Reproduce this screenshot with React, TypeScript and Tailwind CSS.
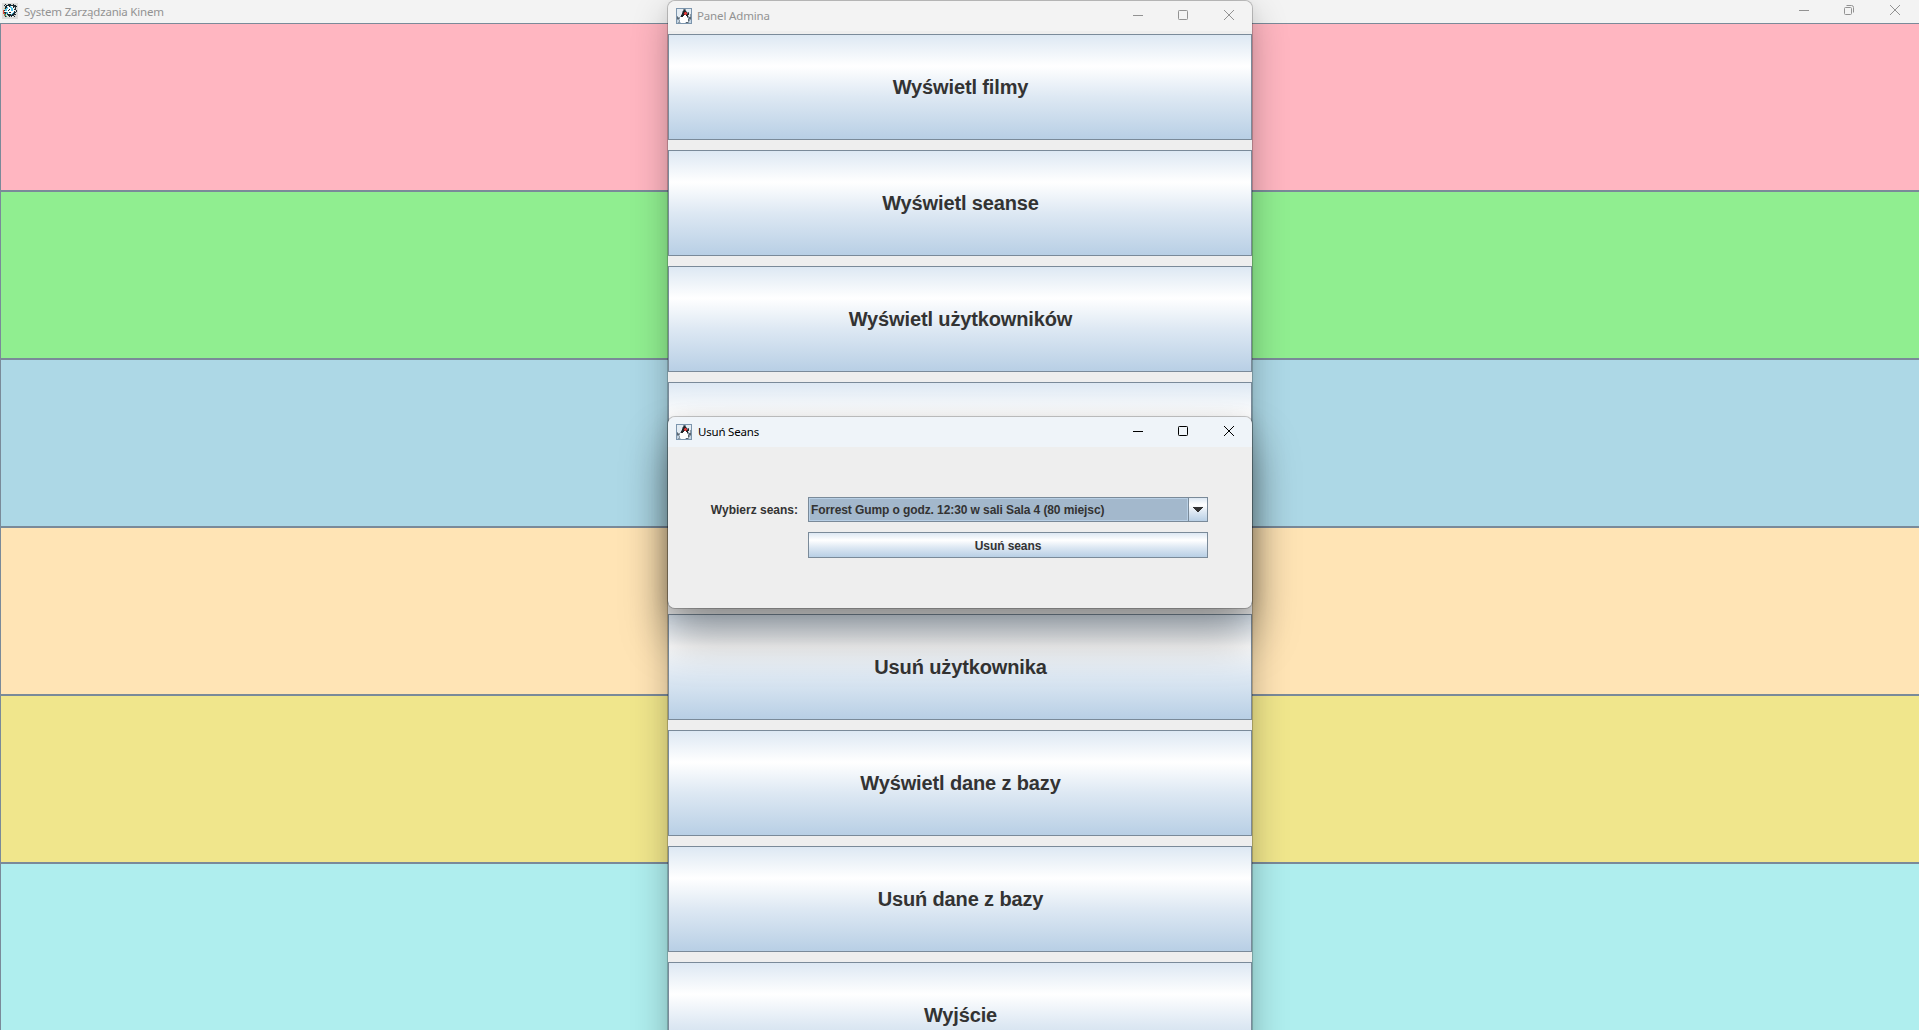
import React from "react";

const rows = ["bg-[#ffb6c1]", "bg-[#90ee90]", "bg-[#add8e6]", "bg-[#ffe4b5]", "bg-[#f0e68c]", "bg-[#afeeee]"];

const actions = [
  "Wyświetl filmy",
  "Wyświetl seanse",
  "Wyświetl użytkowników",
  "",
  "",
  "Usuń użytkownika",
  "Wyświetl dane z bazy",
  "Usuń dane z bazy",
  "Wyjście",
];

const metal =
  "border border-[#7a8a99] bg-[linear-gradient(to_bottom,#dde8f3_0%,#ffffff_30%,#dde8f3_60%,#b8cfe5_100%)] font-bold text-[#333333]";

const palette: Record<string, string> = {
  B: "#7c95ad",
  b: "#c3d3e1",
  w: "#ffffff",
  l: "#e4ecf3",
  g: "#8d9aa5",
  d: "#596570",
  k: "#23272b",
  r: "#e23a38",
  m: "#8c1f22",
  s: "#dcdcda",
  n: "#1d2b31",
  c: "#56c4e6",
  t: "#2b7d90",
  o: "#e0503a",
  y: "#e3b04c",
  e: "#49a06c",
};

const duke = [
  "BBBBBBBBBBBBBBBB",
  "BllllllgdglllllB",
  "BlllllldkdlllllB",
  "BlllllgkkkgllllB",
  "BllllldkmrmgdllB",
  "BlllllkkrrrdkllB",
  "BllllgkkmrmkklgB",
  "BllllkkkwwkkllgB",
  "BgllgkkwwwwkglgB",
  "BdggwwwwwwwggddB",
  "BddgwwwwwwwwgddB",
  "BggbwwwwwwwwdggB",
  "BbbgwwwwwwwwdgbB",
  "BbbgwwwwwwwwgbbB",
  "BbggbwwwwbddgbbB",
  "BBBBBBBBBBBBBBBB",
];

const cinema = [
  "ssssssssssssssss",
  "sssnssnnnssnssss",
  "ssnsnnnnnnnnnnss",
  "sssnnwwncwwnnnns",
  "sssnncwwccwnsnss",
  "ssynccwwwccwsnss",
  "sssccwwnwccwnnss",
  "sonccwnwwccwwsns",
  "soswwwwwwwwwnsns",
  "sonntcwnnwwcnnss",
  "soonctwwwwcnnsss",
  "sseesnnnncnnnnss",
  "ssoessnnnnnnssss",
  "sssnessnsnwsnsss",
  "ssssssssssssssss",
  "ssssssssssssssss",
];

function PixelIcon({ map }: { map: string[] }) {
  return (
    <svg width="16" height="16" viewBox="0 0 16 16" shapeRendering="crispEdges" className="shrink-0">
      {map.map((line, y) =>
        line.split("").map((p, x) => <rect key={`${x}-${y}`} x={x} y={y} width="1" height="1" fill={palette[p]} />)
      )}
    </svg>
  );
}

function Controls({ restore = false }: { restore?: boolean }) {
  return (
    <div className="flex items-center pb-[2px]">
      <svg width="10" height="10" viewBox="0 0 10 10" stroke="currentColor">
        <path d="M0 5.5h10" />
      </svg>
      <svg width="10" height="10" viewBox="0 0 10 10" fill="none" stroke="currentColor" className="ml-[35px]">
        {restore ? (
          <>
            <rect x=".5" y="2.5" width="7" height="7" rx="1" />
            <path d="M2.5 .5h5a2 2 0 0 1 2 2v5" />
          </>
        ) : (
          <rect x=".5" y=".5" width="9" height="9" rx=".8" />
        )}
      </svg>
      <svg width="10" height="10" viewBox="0 0 10 10" stroke="currentColor" className="ml-9">
        <path d="M0 0l10 10M10 0L0 10" />
      </svg>
    </div>
  );
}

export default function App() {
  return (
    <div className="relative h-[1030px] w-[1919px] overflow-hidden bg-[#f3f3f3] font-['Liberation_Sans',sans-serif]">
      <header className="mb-px flex h-[22px] items-center pl-[2px] pr-[19px] text-[#929292]">
        <PixelIcon map={cinema} />
        <span className="ml-[6px] whitespace-nowrap pt-[2px] font-['Noto_Sans',sans-serif] text-[11.5px] leading-[20px] tracking-[-0.2px]">
          System Zarządzania Kinem
        </span>
        <div className="ml-auto">
          <Controls restore />
        </div>
      </header>
      <main>
        {rows.map((color) => (
          <div key={color} className={`h-[168px] border border-r-0 border-[#7a8a99] ${color}`} />
        ))}
      </main>

      <section className="absolute left-[667px] top-0 h-[1060px] w-[586px] rounded-t-lg border border-black/20 bg-[#eeeeee] bg-clip-padding shadow-[0_14px_36px_rgba(0,0,0,0.24),0_2px_14px_rgba(0,0,0,0.05)]">
        <header className="flex h-[30px] items-center rounded-t-lg bg-[#f3f3f3] pl-2 pr-[18px] text-[#929292]">
          <PixelIcon map={duke} />
          <span className="ml-[5px] font-['Noto_Sans',sans-serif] text-[11.5px] tracking-[-0.15px]">Panel Admina</span>
          <div className="ml-auto">
            <Controls />
          </div>
        </header>
        <div className="mt-[3px] flex flex-col gap-[10px]">
          {actions.map((label, i) => (
            <button key={i} className={`h-[106px] w-full pl-px text-[20px] tracking-[-0.13px] ${metal}`}>
              {label}
            </button>
          ))}
        </div>
      </section>

      <section className="absolute left-[667px] top-[416px] h-[193px] w-[586px] rounded-lg border border-black/20 bg-[#eeeeee] bg-clip-padding shadow-[0_28px_46px_rgba(0,0,0,0.36),0_2px_18px_rgba(0,0,0,0.10)]">
        <header className="flex h-[30px] items-center rounded-t-lg bg-[#eff4f9] pl-2 pr-[18px] text-black">
          <PixelIcon map={duke} />
          <span className="ml-[6px] font-['Noto_Sans',sans-serif] text-[11.5px] tracking-[-0.2px]">Usuń Seans</span>
          <div className="ml-auto">
            <Controls />
          </div>
        </header>
        <div className="grid grid-cols-[130px_400px] gap-x-[10px] gap-y-[10px] pt-[50px] text-[12px] font-bold text-[#333333]">
          <label className="self-center text-right">Wybierz seans:</label>
          <div className="flex h-[25px] border border-[#7a8a99]">
            <div className="flex flex-1 items-center border border-[#b8cfe5] bg-[#a3b8cc] pl-px tracking-[-0.09px]">
              Forrest Gump o godz. 12:30 w sali Sala 4 (80 miejsc)
            </div>
            <div className="flex w-[19px] items-center border-l border-[#7a8a99] bg-[linear-gradient(to_bottom,#dde8f3_0%,#ffffff_30%,#dde8f3_60%,#b8cfe5_100%)] pl-1">
              <svg width="10" height="5" viewBox="0 0 10 5" fill="#333333" shapeRendering="crispEdges">
                <path d="M0 0h10v1H0zM1 1h8v1H1zM2 2h6v1H2zM3 3h4v1H3zM4 4h2v1H4z" />
              </svg>
            </div>
          </div>
          <button className={`col-start-2 h-[26px] pt-px tracking-[-0.09px] ${metal}`}>Usuń seans</button>
        </div>
      </section>
    </div>
  );
}
